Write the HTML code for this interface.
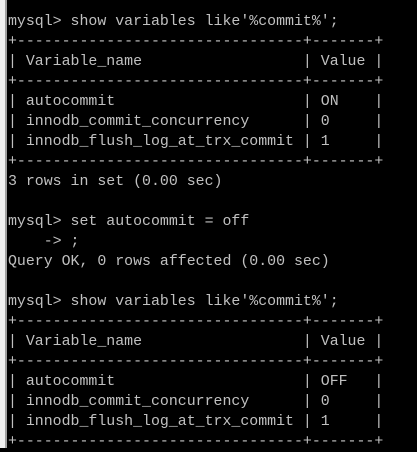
<!DOCTYPE html><html><head><style>
html,body{margin:0;width:417px;height:448px;overflow:hidden;background:#000}
.strip{position:absolute;left:0;top:0;width:5px;height:448px;background:#f0f0f0;border-right:2px solid #a0a0a0}
pre{position:absolute;left:8px;top:12px;margin:0;font-family:"Liberation Mono",monospace;font-size:14.9px;line-height:20px;color:#c0c0c0}
</style></head><body><div class="strip"></div><pre>mysql&gt; show variables like'%commit%';
+--------------------------------+-------+
| Variable_name                  | Value |
+--------------------------------+-------+
| autocommit                     | ON    |
| innodb_commit_concurrency      | 0     |
| innodb_flush_log_at_trx_commit | 1     |
+--------------------------------+-------+
3 rows in set (0.00 sec)

mysql&gt; set autocommit = off
    -&gt; ;
Query OK, 0 rows affected (0.00 sec)

mysql&gt; show variables like'%commit%';
+--------------------------------+-------+
| Variable_name                  | Value |
+--------------------------------+-------+
| autocommit                     | OFF   |
| innodb_commit_concurrency      | 0     |
| innodb_flush_log_at_trx_commit | 1     |
+--------------------------------+-------+</pre></body></html>
